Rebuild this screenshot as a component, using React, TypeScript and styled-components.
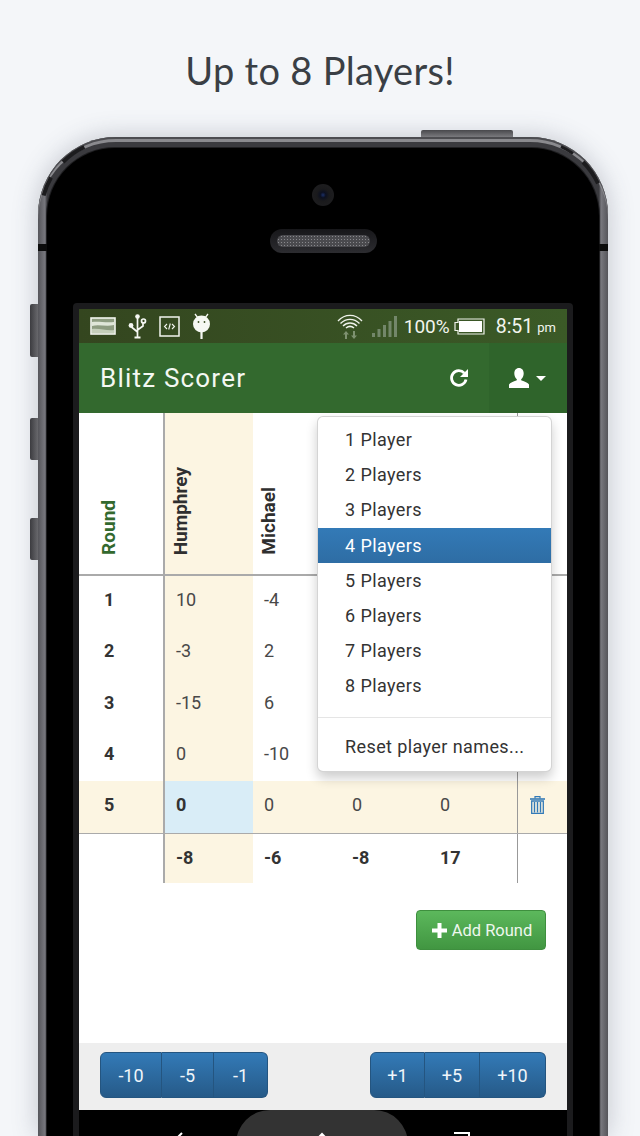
import React from "react";
import styled, { createGlobalStyle } from "styled-components";

const GlobalStyle = createGlobalStyle`
  html, body {
    margin: 0;
    padding: 0;
    background: #f4f6f9;
  }
  * {
    box-sizing: border-box;
  }
`;

const Page = styled.div`
  width: 640px;
  height: 1136px;
  overflow: hidden;
  display: flex;
  flex-direction: column;
  background: #f4f6f9;
  font-family: Roboto, "Liberation Sans", sans-serif;
`;

const Heading = styled.h1`
  margin: 0;
  flex-shrink: 0;
  height: 137px;
  padding-top: 44px;
  text-align: center;
  font-family: Lato, "Open Sans", sans-serif;
  font-size: 38px;
  line-height: 52px;
  font-weight: 400;
  letter-spacing: 0.3px;
  color: #3a3f45;
`;

// --- Phone body ---

const PhoneShell = styled.div`
  position: relative;
  flex: 1;
  min-height: 0;
  width: 570px;
  margin-left: 38px;
  padding: 11px 9px 0;
  border-radius: 78px 78px 0 0;
  background: linear-gradient(90deg, #55555a 0%, #77777d 1.2%, #3a3a3e 1.6%, #3a3a3e 98.4%, #77777d 98.8%, #55555a 100%);
  box-shadow: 0 0 26px rgba(60, 70, 90, 0.28), inset 0 2px 0 #4c4c50, inset 0 5px 0 #8a8a8e;
  display: flex;
`;

const SideButton = styled.div<{ $top: number; $height: number }>`
  position: absolute;
  left: -8px;
  top: ${({ $top }) => $top}px;
  width: 8px;
  height: ${({ $height }) => $height}px;
  border-radius: 2px 0 0 2px;
  background: linear-gradient(90deg, #3c3c40, #68686c);
`;

const TopButton = styled.div`
  position: absolute;
  top: -7px;
  left: 383px;
  width: 92px;
  height: 7px;
  border-radius: 2px 2px 0 0;
  background: linear-gradient(180deg, #48484c, #7a7a7e);
`;

const BandNotch = styled.div<{ $side: "left" | "right" }>`
  position: absolute;
  top: 107px;
  ${({ $side }) => $side}: 0;
  width: 9px;
  height: 7px;
  background: #0c0c0c;
`;

const CornerGlints = styled.svg`
  position: absolute;
  top: 0;
  left: 0;
  pointer-events: none;
`;

const PhoneFace = styled.div`
  flex: 1;
  min-width: 0;
  display: flex;
  flex-direction: column;
  align-items: center;
  padding-top: 36px;
  border-radius: 68px 68px 0 0;
  background: #000;
  box-shadow: 0 0 0 1px #1e1e20;
`;

const Camera = styled.div`
  flex-shrink: 0;
  width: 22px;
  height: 22px;
  border-radius: 50%;
  background: radial-gradient(circle, #1b2f66 0, #0c1020 18%, #1a1a1c 40%, #202022 100%);
`;

const Speaker = styled.div`
  flex-shrink: 0;
  margin-top: 23px;
  width: 107px;
  height: 24px;
  padding: 6px 7px;
  border-radius: 12px;
  background: linear-gradient(180deg, #17171a, #2c2c30);
`;

const SpeakerMesh = styled.div`
  width: 100%;
  height: 100%;
  border-radius: 6px;
  background-color: #4a4a4e;
  background-image: radial-gradient(#88888c 35%, transparent 40%);
  background-size: 3px 3px;
`;

const ScreenBezel = styled.div`
  margin-top: 50px;
  flex: 1;
  width: 500px;
  min-height: 0;
  padding: 6px 6px 0;
  background: #1b1b1d;
  border-radius: 4px 4px 0 0;
  display: flex;
`;

const Screen = styled.div`
  flex: 1;
  min-width: 0;
  display: flex;
  flex-direction: column;
  background: #fff;
`;

// --- Android status bar ---

const StatusBar = styled.div`
  height: 34px;
  flex-shrink: 0;
  display: flex;
  align-items: center;
  padding: 0 11px;
  background: linear-gradient(90deg, #34461f, #3b5a27);
  color: #f2f5ee;
`;

const StatusIcons = styled.div`
  display: flex;
  align-items: center;
  gap: 12px;
`;

const StatusRight = styled.div`
  margin-left: auto;
  display: flex;
  align-items: center;
`;

const SignalGap = styled.span`
  width: 9px;
`;

const Battery = styled.span`
  font-size: 19px;
  margin: 0 4px 0 7px;
`;

const Clock = styled.span`
  margin-left: 11px;
  font-size: 19.5px;
`;

const ClockSuffix = styled.span`
  margin-left: 4px;
  font-size: 13px;
  padding-top: 3px;
`;

// --- App bar ---

const AppBar = styled.div`
  height: 70px;
  flex-shrink: 0;
  display: flex;
  align-items: center;
  padding-left: 21px;
  background: #33692e;
  color: #fff;
`;

const AppTitle = styled.div`
  font-size: 26px;
  letter-spacing: 1.2px;
  color: #f4f8f2;
`;

const RefreshButton = styled.div`
  margin-left: auto;
  margin-right: 20px;
  display: flex;
`;

const UserButton = styled.div`
  width: 78px;
  height: 100%;
  display: flex;
  align-items: center;
  gap: 7px;
  padding-left: 20px;
  background: #2f642b;
`;

const Caret = styled.span`
  width: 0;
  height: 0;
  border-left: 5px solid transparent;
  border-right: 5px solid transparent;
  border-top: 5px solid #fff;
`;

// --- Score table ---

const Main = styled.div`
  position: relative;
  flex: 0 0 630px;
  display: flex;
  flex-direction: column;
`;

const Row = styled.div<{ $height: number; $tint?: boolean; $rule?: boolean }>`
  flex-shrink: 0;
  display: grid;
  grid-template-columns: 86px 88px 88px 88px 88px 50px;
  height: ${({ $height }) => $height}px;
  background: ${({ $tint }) => ($tint ? "#fcf5e2" : "transparent")};
  border-bottom: ${({ $rule }) => ($rule ? "1px solid #aaa" : "none")};
`;

const HeaderRow = styled(Row)`
  border-bottom: 2px solid #aaa;
`;

const HeadCell = styled.div<{ $tint?: boolean; $first?: boolean }>`
  display: flex;
  align-items: flex-end;
  padding: 0 0 19px ${({ $first }) => ($first ? "20px" : "6px")};
  background: ${({ $tint }) => ($tint ? "#fcf5e2" : "transparent")};
  border-right: ${({ $first }) => ($first ? "2px solid #aaa" : "none")};
`;

const VerticalName = styled.span<{ $accent?: boolean }>`
  writing-mode: vertical-rl;
  transform: rotate(180deg);
  font-size: 19px;
  line-height: 19px;
  font-weight: 700;
  color: ${({ $accent }) => ($accent ? "#33692e" : "#2f2f2f")};
`;

const RoundCell = styled.div`
  padding: 11px 0 0 25px;
  font-size: 18px;
  line-height: 26px;
  font-weight: 700;
  color: #333;
  border-right: 2px solid #aaa;
`;

const ScoreCell = styled.div<{ $tint?: boolean; $active?: boolean; $bold?: boolean }>`
  padding: 11px 0 0 11px;
  font-size: 18px;
  line-height: 26px;
  font-weight: ${({ $bold }) => ($bold ? 700 : 400)};
  color: ${({ $bold }) => ($bold ? "#333" : "#484848")};
  background: ${({ $tint, $active }) =>
    $active ? "#d9edf7" : $tint ? "#fcf5e2" : "transparent"};
`;

const ActionCell = styled.div`
  display: flex;
  align-items: flex-start;
  padding: 15px 0 0 12px;
  border-left: 1px solid #999;
`;

const AddRow = styled.div`
  display: flex;
  justify-content: flex-end;
  padding: 27px 21px 0 0;
`;

const AddButton = styled.button`
  width: 130px;
  height: 40px;
  display: flex;
  align-items: center;
  justify-content: center;
  gap: 5px;
  padding: 0 0 0 2px;
  border: 1px solid #3e8f3e;
  border-radius: 4px;
  background: linear-gradient(180deg, #5cb85c, #419641);
  color: #eef7ee;
  font-family: inherit;
  font-size: 16.5px;
`;

// --- Dropdown ---

const Menu = styled.div`
  position: absolute;
  top: 3px;
  right: 15px;
  width: 235px;
  height: 356px;
  padding: 5px 0;
  background: #fff;
  border: 1px solid rgba(0, 0, 0, 0.17);
  border-radius: 6px;
  box-shadow: 0 6px 12px rgba(0, 0, 0, 0.2);
`;

const MenuItem = styled.div<{ $active?: boolean }>`
  height: 35.2px;
  display: flex;
  align-items: center;
  padding-left: 27px;
  font-size: 18px;
  letter-spacing: 0.4px;
  color: ${({ $active }) => ($active ? "#fff" : "#333")};
  background: ${({ $active }) =>
    $active ? "linear-gradient(180deg, #337ab7, #2e6da4)" : "transparent"};
`;

const MenuDivider = styled.div`
  height: 1px;
  margin: 13px 0 11px;
  background: #e5e5e5;
`;

// --- Bottom score buttons ---

const ScoreBar = styled.div`
  height: 67px;
  flex-shrink: 0;
  display: flex;
  align-items: flex-start;
  justify-content: space-between;
  padding: 9px 21px 0;
  background: #eee;
`;

const ButtonGroup = styled.div`
  display: flex;
`;

const ScoreButton = styled.button<{ $width: number }>`
  width: ${({ $width }) => $width}px;
  height: 46px;
  padding: 0;
  border: 1px solid #245580;
  border-left-width: 0;
  background: linear-gradient(180deg, #337ab7, #265a88);
  color: #f0f5fa;
  font-family: inherit;
  font-size: 18px;

  &:first-child {
    border-left-width: 1px;
    border-radius: 6px 0 0 6px;
  }
  &:last-child {
    border-radius: 0 6px 6px 0;
  }
`;

// --- Android nav bar ---

const NavBar = styled.div`
  flex: 0 0 60px;
  display: flex;
  justify-content: center;
  background: #000;
`;

const NavSlot = styled.div`
  padding-top: 22px;
  display: flex;
  justify-content: center;
`;

const BackSlot = styled(NavSlot)`
  margin-right: 42px;
`;

const RecentSlot = styled(NavSlot)`
  margin-left: 46px;
`;

const HomeSlot = styled(NavSlot)`
  width: 172px;
  height: 60px;
  border-radius: 34px 34px 0 0;
  background: #333;
`;

// --- Drawn icons ---

const ImageIcon = () => (
  <svg width="26" height="18" viewBox="0 0 26 18">
    <rect x="1" y="1" width="24" height="16" fill="#8d9c80" stroke="#f2f5ee" strokeWidth="1.6" />
    <path d="M2 5c6-1 14 1 22 0v3c-8 2-15-1-22 1z" fill="#dfe6d8" />
    <path d="M2 12c7-1 15 2 22 1v3H2z" fill="#c4cfba" />
  </svg>
);

const UsbIcon = () => (
  <svg width="19" height="25" viewBox="0 0 19 25" fill="none" stroke="#f6f8f3" strokeWidth="1.7">
    <path d="M9.5 3v20M9.5 18L3.5 13M9.5 16l5.5-4V8" />
    <circle cx="9.5" cy="2.5" r="2.3" fill="#f6f8f3" stroke="none" />
    <circle cx="3" cy="11.5" r="2.4" fill="#f6f8f3" stroke="none" />
    <circle cx="15.5" cy="7" r="2" fill="none" />
    <path d="M6.5 23.5h6" strokeWidth="2" />
  </svg>
);

const CodeIcon = () => (
  <svg width="21" height="21" viewBox="0 0 21 21" fill="none" stroke="#f2f5ee">
    <rect x="1" y="1" width="19" height="19" strokeWidth="1.5" />
    <path d="M8 8l-2.5 2.5L8 13M13 8l2.5 2.5L13 13M11.3 7.5l-1.6 6" strokeWidth="1.1" />
  </svg>
);

const AndroidIcon = () => (
  <svg width="19" height="26" viewBox="0 0 19 26" fill="#f6f8f3">
    <circle cx="9.5" cy="11" r="8.5" />
    <path d="M3 1l3 4M16 1l-3 4" stroke="#f6f8f3" strokeWidth="1.3" />
    <rect x="8.4" y="19" width="2.2" height="7" />
    <circle cx="6.5" cy="9" r="0.9" fill="#3a4d24" />
    <circle cx="12.5" cy="9" r="0.9" fill="#3a4d24" />
  </svg>
);

const WifiIcon = () => (
  <svg width="26" height="26" viewBox="0 0 26 26" fill="none" stroke="#eef2ea" strokeWidth="1.4">
    <path d="M1 8c7-7.500 17-7.500 24 0M3.500 10.500c5.500-5.500 13.500-5.500 19 0M6 13c4-4 10-4 14 0" />
    <path d="M9 15c2.500-2 5.500-2 8 0" strokeWidth="1.6" />
    <path d="M9 18l-3 3.500h2V26h2v-4.500h2zM17 26l3-3.500h-2V18h-2v4.500h-2z" fill="#7e9270" stroke="none" />
  </svg>
);

const SignalIcon = () => (
  <svg width="25" height="21" viewBox="0 0 25 21" fill="#73876a">
    <rect x="0" y="17" width="3" height="4" />
    <rect x="5.500" y="13" width="3" height="8" />
    <rect x="11" y="9" width="3" height="12" />
    <rect x="16.500" y="5" width="3" height="16" />
    <rect x="22" y="0" width="3" height="21" />
  </svg>
);

const BatteryIcon = () => (
  <svg width="31" height="17" viewBox="0 0 31 17">
    <path d="M4 1h26v15H4v-3.500H1v-8h3z" fill="none" stroke="#eef2ea" strokeWidth="1.2" />
    <rect x="5" y="3" width="23" height="11" fill="#fff" />
  </svg>
);

const RefreshIcon = () => (
  <svg width="20" height="20" viewBox="0 0 20 20" fill="none">
    <path d="M15.300 5.100A7.300 7.300 0 1 0 17 11.500" stroke="#fff" strokeWidth="2.800" />
    <path d="M19 1v8h-8z" fill="#fff" />
  </svg>
);

const UserIcon = () => (
  <svg width="20" height="20" viewBox="0 0 20 20" fill="#fff">
    <path d="M10 0c3 0 4.700 2.300 4.700 5.200 0 2.300-.9 4.600-2.300 5.800-.5.5-.4 1.200.3 1.500 2.800 1.100 6.300 2.400 7.300 4V20H0v-3.500c1-1.600 4.500-2.900 7.300-4 .7-.3.8-1 .3-1.500C6.200 9.800 5.300 7.500 5.300 5.200 5.300 2.300 7 0 10 0z" />
  </svg>
);

const TrashIcon = () => (
  <svg width="15" height="18" viewBox="0 0 15 18" fill="none" stroke="#337ab7">
    <path d="M0 3h15" strokeWidth="1.600" />
    <path d="M5 2.500V.7h5v1.800" strokeWidth="1.200" />
    <path d="M1.700 5h11.600v12.300H1.700z" strokeWidth="1.300" />
    <path d="M4.500 6v10.500M7.500 6v10.500M10.500 6v10.500" strokeWidth="1.400" />
  </svg>
);

const PlusIcon = () => (
  <svg width="15" height="15" viewBox="0 0 15 15" fill="#fff">
    <path d="M5.500 0h4v5.500H15v4H9.500V15h-4V9.500H0v-4h5.500z" />
  </svg>
);

const NavBack = () => (
  <svg width="18" height="14" viewBox="0 0 18 14" fill="none" stroke="#fff" strokeWidth="2">
    <path d="M6 1L2 5l4 4M2 5h10c3 0 5 2 5 5v4" />
  </svg>
);

const NavHome = () => (
  <svg width="18" height="14" viewBox="0 0 18 14" fill="none" stroke="#fff" strokeWidth="2">
    <path d="M1 10l8-8 8 8M4 8v6M14 8v6" />
  </svg>
);

const NavRecent = () => (
  <svg width="16" height="14" viewBox="0 0 16 14" fill="none" stroke="#fff" strokeWidth="2">
    <path d="M0 1h15v13M0 5v9h11V5z" />
  </svg>
);

// --- Data ---

// the third and fourth columns sit behind the open menu until the last round
const players = ["Humphrey", "Michael", "", ""];

const rounds = [
  [10, -4, "", ""],
  [-3, 2, "", ""],
  [-15, 6, "", ""],
  [0, -10, "", ""],
];

const totals = [-8, -6, -8, 17];

const menuItems = ["1 Player", "2 Players", "3 Players", "4 Players", "5 Players", "6 Players", "7 Players", "8 Players"];

const minusButtons = [
  { label: "-10", width: 62 },
  { label: "-5", width: 52 },
  { label: "-1", width: 54 },
];

const plusButtons = [
  { label: "+1", width: 55 },
  { label: "+5", width: 55 },
  { label: "+10", width: 66 },
];

const App: React.FC = () => {
  return (
    <Page>
      <GlobalStyle />
      <Heading>Up to 8 Players!</Heading>

      <PhoneShell>
        <TopButton />
        <SideButton $top={167} $height={53} />
        <SideButton $top={281} $height={42} />
        <SideButton $top={381} $height={42} />

        <PhoneFace>
          <Camera />
          <Speaker>
            <SpeakerMesh />
          </Speaker>

          <ScreenBezel>
            <Screen>
              <StatusBar>
                <StatusIcons>
                  <ImageIcon />
                  <UsbIcon />
                  <CodeIcon />
                  <AndroidIcon />
                </StatusIcons>
                <StatusRight>
                  <WifiIcon />
                  <SignalGap />
                  <SignalIcon />
                  <Battery>100%</Battery>
                  <BatteryIcon />
                  <Clock>8:51</Clock>
                  <ClockSuffix>pm</ClockSuffix>
                </StatusRight>
              </StatusBar>

              <AppBar>
                <AppTitle>Blitz Scorer</AppTitle>
                <RefreshButton>
                  <RefreshIcon />
                </RefreshButton>
                <UserButton>
                  <UserIcon />
                  <Caret />
                </UserButton>
              </AppBar>

              <Main>
                <HeaderRow $height={163}>
                  <HeadCell $first>
                    <VerticalName $accent>Round</VerticalName>
                  </HeadCell>
                  {players.map((name, idx) => (
                    <HeadCell key={idx} $tint={idx === 0}>
                      <VerticalName>{name}</VerticalName>
                    </HeadCell>
                  ))}
                  <ActionCell />
                </HeaderRow>

                {rounds.map((scores, idx) => (
                  <Row key={idx} $height={51.25}>
                    <RoundCell>{idx + 1}</RoundCell>
                    {scores.map((score, col) => (
                      <ScoreCell key={col} $tint={col === 0}>
                        {score}
                      </ScoreCell>
                    ))}
                    <ActionCell />
                  </Row>
                ))}

                <Row $height={53} $tint $rule>
                  <RoundCell>5</RoundCell>
                  <ScoreCell $active $bold>
                    0
                  </ScoreCell>
                  <ScoreCell>0</ScoreCell>
                  <ScoreCell>0</ScoreCell>
                  <ScoreCell>0</ScoreCell>
                  <ActionCell>
                    <TrashIcon />
                  </ActionCell>
                </Row>

                <Row $height={49}>
                  <RoundCell />
                  {totals.map((total, idx) => (
                    <ScoreCell key={idx} $tint={idx === 0} $bold>
                      {total}
                    </ScoreCell>
                  ))}
                  <ActionCell />
                </Row>

                <AddRow>
                  <AddButton>
                    <PlusIcon />
                    Add Round
                  </AddButton>
                </AddRow>

                <Menu>
                  {menuItems.map((item) => (
                    <MenuItem key={item} $active={item === "4 Players"}>
                      {item}
                    </MenuItem>
                  ))}
                  <MenuDivider />
                  <MenuItem>Reset player names...</MenuItem>
                </Menu>
              </Main>

              <ScoreBar>
                <ButtonGroup>
                  {minusButtons.map((btn) => (
                    <ScoreButton key={btn.label} $width={btn.width}>
                      {btn.label}
                    </ScoreButton>
                  ))}
                </ButtonGroup>
                <ButtonGroup>
                  {plusButtons.map((btn) => (
                    <ScoreButton key={btn.label} $width={btn.width}>
                      {btn.label}
                    </ScoreButton>
                  ))}
                </ButtonGroup>
              </ScoreBar>

              <NavBar>
                <BackSlot>
                  <NavBack />
                </BackSlot>
                <HomeSlot>
                  <NavHome />
                </HomeSlot>
                <RecentSlot>
                  <NavRecent />
                </RecentSlot>
              </NavBar>
            </Screen>
          </ScreenBezel>
        </PhoneFace>

        <BandNotch $side="left" />
        <BandNotch $side="right" />
        <CornerGlints width="570" height="90" viewBox="0 0 570 90" fill="none" stroke="#1c1c1e" strokeWidth="4">
          <path d="M25 25A75 75 0 0 1 46.300 10" />
          <path d="M5.600 58.600A75 75 0 0 1 13 40.500" />
          <path d="M545 25A75 75 0 0 1 560 46.300" />
          <path d="M523 9.700A75 75 0 0 1 535 16.500" strokeWidth="3" />
        </CornerGlints>
      </PhoneShell>
    </Page>
  );
};

export default App;
